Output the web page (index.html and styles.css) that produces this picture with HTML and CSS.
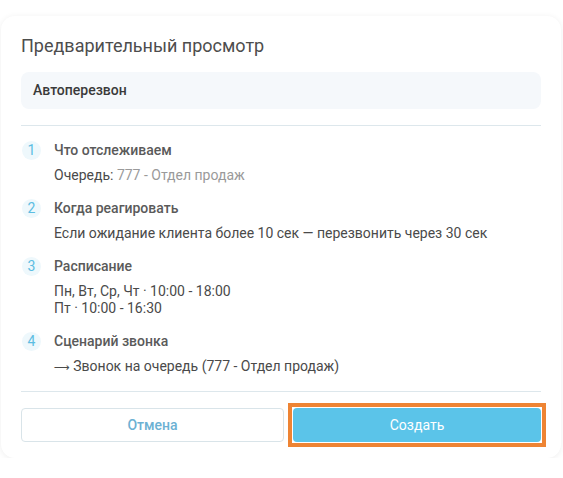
FILE: index.html
```html
<!DOCTYPE html>
<html lang="ru">
  <head>
    <meta charset="UTF-8" />
    <meta name="viewport" content="width=device-width, initial-scale=1.0" />
    <title>Предварительный просмотр</title>
    <link rel="stylesheet" href="styles.css">
  </head>
  <body>
    <div class="preview-card">
      <h2 class="preview-title">Предварительный просмотр</h2>

      <div class="rule-name">Автоперезвон</div>

      <!-- Steps of the rule -->
      <ol class="steps">
        <li class="step">
          <span class="step-num">1</span>
          <div class="step-body">
            <div class="step-title">Что отслеживаем</div>
            <div class="step-text">Очередь: <span class="muted">777 - Отдел продаж</span></div>
          </div>
        </li>
        <li class="step">
          <span class="step-num">2</span>
          <div class="step-body">
            <div class="step-title">Когда реагировать</div>
            <div class="step-text">Если ожидание клиента более 10 сек — перезвонить через 30 сек</div>
          </div>
        </li>
        <li class="step">
          <span class="step-num">3</span>
          <div class="step-body">
            <div class="step-title">Расписание</div>
            <div class="step-text">Пн, Вт, Ср, Чт · 10:00 - 18:00<br>Пт · 10:00 - 16:30</div>
          </div>
        </li>
        <li class="step">
          <span class="step-num">4</span>
          <div class="step-body">
            <div class="step-title">Сценарий звонка</div>
            <div class="step-text"><span class="arrow">⟶</span> Звонок на очередь (777 - Отдел продаж)</div>
          </div>
        </li>
      </ol>

      <div class="actions">
        <button class="btn btn-cancel">Отмена</button>
        <button class="btn btn-create">Создать</button>
      </div>
    </div>
  </body>
</html>
```

FILE: styles.css
```css
/* basic styling */
* {
  margin: 0;
  padding: 0;
  box-sizing: border-box;
}
body {
  font-family: Roboto, "Liberation Sans", sans-serif;
  background-color: #ffffff;
  color: #4a4a4a;
}

/* Card */
.preview-card {
  margin: 16px 2px 0 1px;
  padding: 18px 20px 16px;
  background: #ffffff;
  border-radius: 14px;
  box-shadow: 0 1px 6px rgba(0, 0, 0, 0.07);
}

.preview-title {
  font-size: 18px;
  line-height: 24px;
  font-weight: 400;
  color: #4d4d4d;
  margin-bottom: 14px;
}

/* Rule name box */
.rule-name {
  height: 37px;
  line-height: 37px;
  padding: 0 12px;
  background: #f5f8fb;
  border-radius: 8px;
  font-size: 14px;
  font-weight: 500;
  color: #3a3a3a;
  margin-bottom: 16px;
}

/* Steps list */
.steps {
  list-style: none;
  border-top: 1px solid #dde7ec;
  border-bottom: 1px solid #dde7ec;
  padding: 15px 0 15px;
  display: flex;
  flex-direction: column;
  gap: 15px;
}
.step {
  display: flex;
  gap: 13px;
}
.step-num {
  flex: none;
  width: 19px;
  height: 19px;
  margin-left: 1px;
  border-radius: 50%;
  background: #eef8fc;
  color: #5cbde2;
  font-size: 14px;
  line-height: 19px;
  text-align: center;
}
.step-body {
  display: flex;
  flex-direction: column;
  gap: 7px;
}
.step-title {
  font-size: 14px;
  line-height: 19px;
  font-weight: 500;
  color: #5a5a5a;
}
.step-text {
  font-size: 14px;
  line-height: 17px;
  color: #4a4a4a;
}
.step-text .muted {
  color: #9a9a9a;
}
.step-text .arrow {
  font-family: "DejaVu Sans", sans-serif;
  font-size: 11px;
}

/* Buttons */
.actions {
  display: grid;
  grid-template-columns: 263px 1fr;
  gap: 9px;
  margin-top: 16px;
}
.btn {
  height: 34px;
  font-family: inherit;
  font-size: 14px;
  font-weight: 500;
  border-radius: 4px;
  cursor: pointer;
}
.btn-cancel {
  background: #ffffff;
  border: 1px solid #d9e4e9;
  color: #6cb1d3;
}
.btn-create {
  position: relative;
  background: #5bc4e9;
  border: none;
  color: #ffffff;
  font-weight: 400;
}
/* focus frame drawn around the primary button */
.btn-create::after {
  content: "";
  position: absolute;
  inset: -5px;
  border: 4px solid #ee8434;
}
```
